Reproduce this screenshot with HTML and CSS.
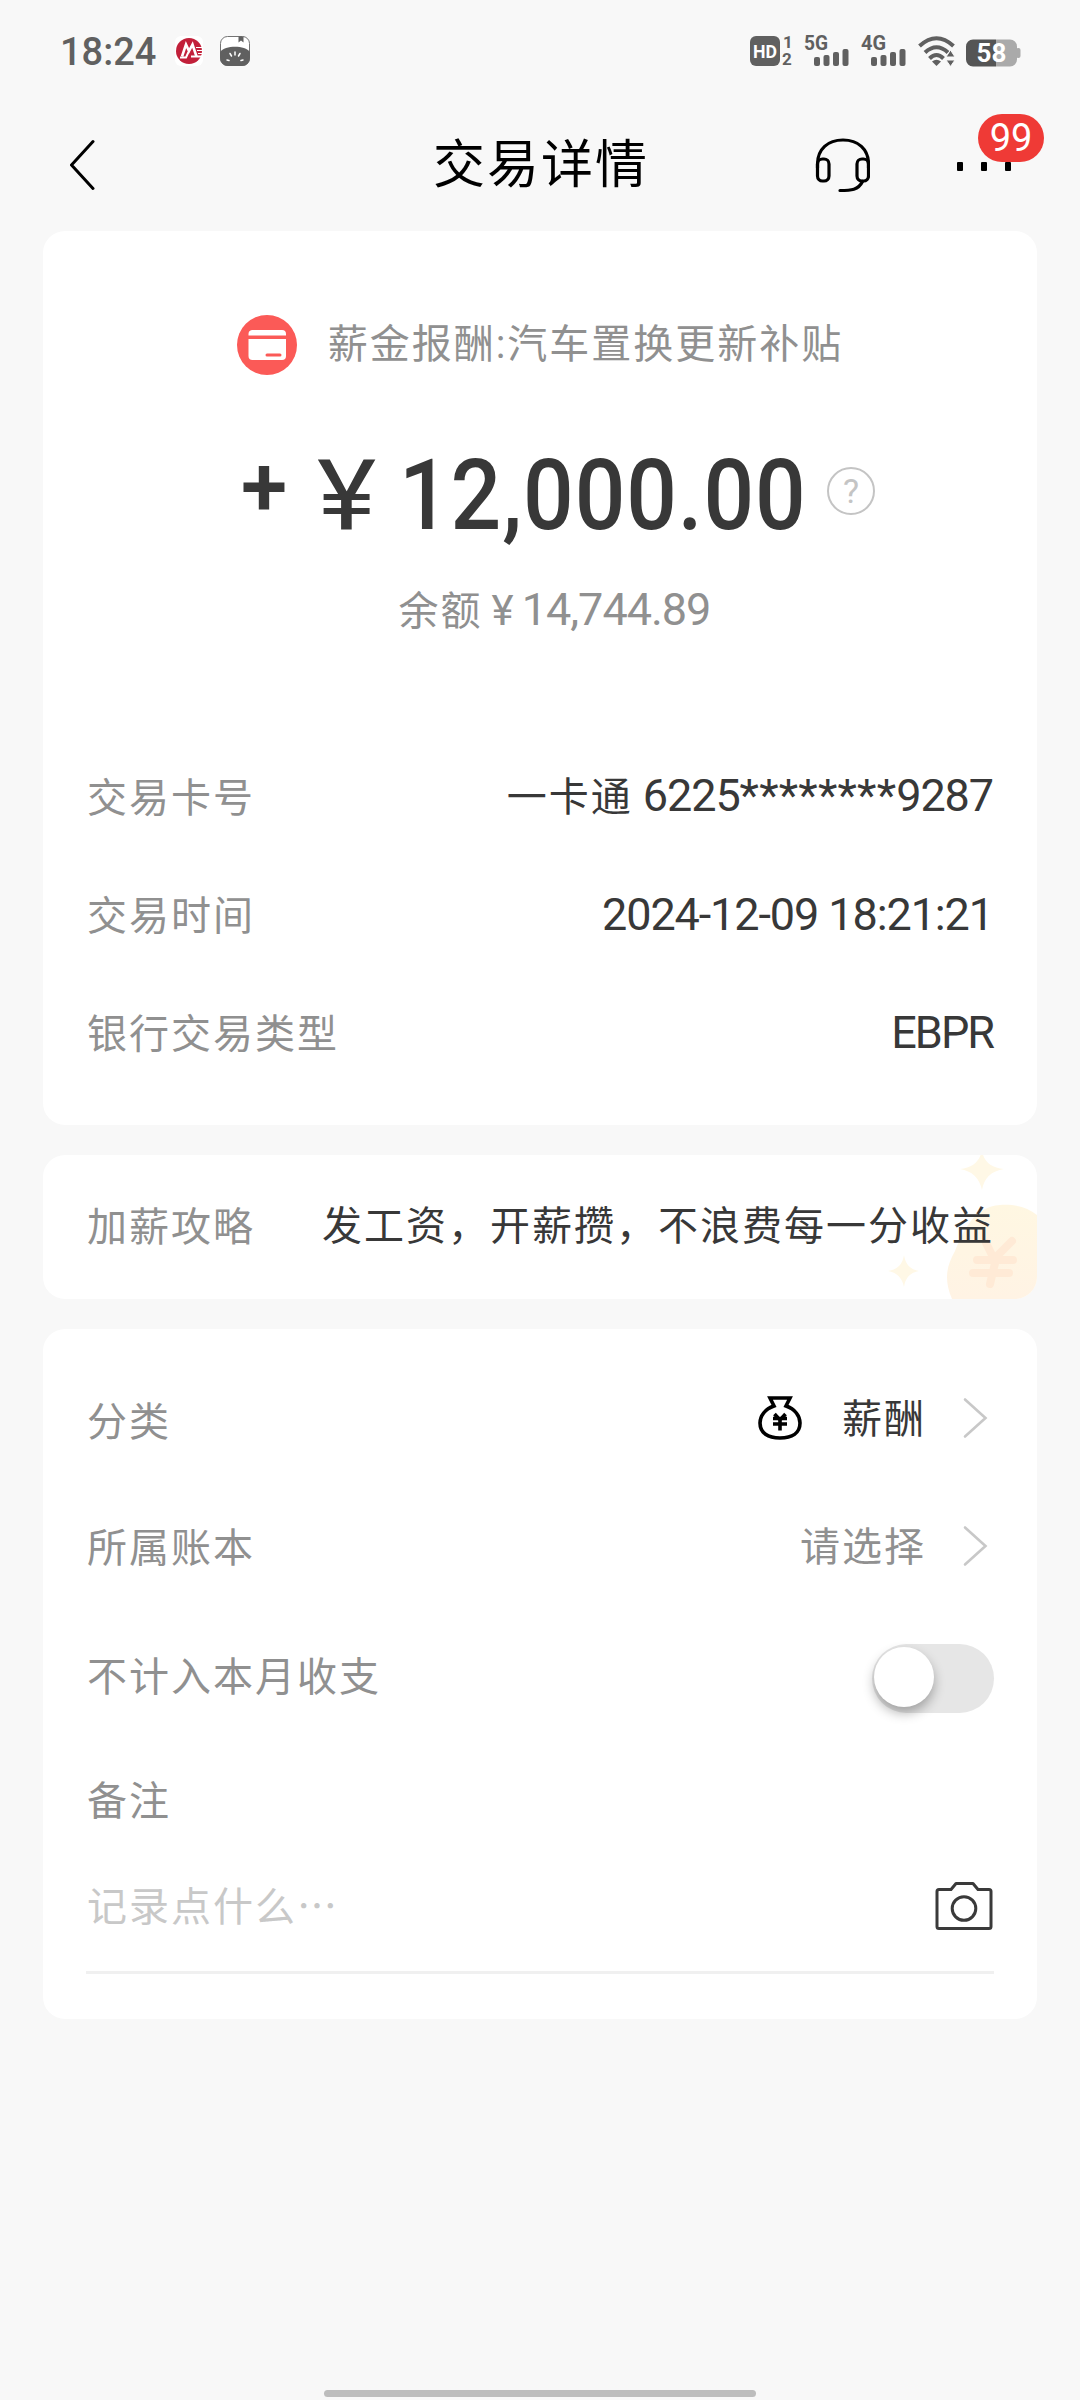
FILE: index.html
```html
<!DOCTYPE html>
<html lang="zh-CN">
<head>
  <meta charset="UTF-8" />
  <meta name="viewport" content="width=device-width, initial-scale=1" />
  <title>交易详情</title>
  <link rel="stylesheet" href="styles.css">
</head>
<body>
  <div class="status-bar">
    <span class="clock">18:24</span>
    <svg class="app-icon" width="28" height="30" viewBox="0 0 28 30">
      <rect width="28" height="30" rx="6" fill="#fff"/>
      <circle cx="14" cy="15" r="13" fill="#c2203a"/>
      <path d="M7 20.500L11 8.500L14 15L17.500 8.500L21.500 20.500" fill="none" stroke="#fff" stroke-width="2.6"/>
      <path d="M5 21.500H11L13.500 16M16 20.500H27" fill="none" stroke="#fff" stroke-width="2"/>
      <path d="M21 11.500h7M22 14.500h6M23 17.500h5" stroke="#fff" stroke-width="1"/>
    </svg>
    <svg class="app-icon app-icon-clip" width="32" height="32" viewBox="0 0 32 32">
      <rect x="1.500" y="1.500" width="29" height="29" rx="7" fill="#fff" stroke="#737373"/>
      <path d="M1 17C6 10 26 10 31 17V23a8 8 0 0 1-8 8H9a8 8 0 0 1-8-8Z" fill="#606060"/>
      <path d="M19.500 1.500h5v6l-2.500-2-2.500 2Z" fill="#606060"/>
      <path d="M16 17v3M11 18.500l1.500 2.500M21 18.500l-1.500 2.500M8 25l2 .5M24 25l-2 .5" stroke="#fff" stroke-width="1.500" stroke-linecap="round"/>
    </svg>

    <div class="status-right">
      <svg width="46" height="40" viewBox="0 -4 46 40">
        <rect x="0" y="1" width="30" height="30" rx="6" fill="#606060"/>
        <text class="st-text st-hd" x="3" y="22.500" textLength="24" lengthAdjust="spacingAndGlyphs">HD</text>
        <text class="st-text st-num" x="33" y="13">1</text>
        <text class="st-text st-num" x="32" y="30">2</text>
      </svg>
      <svg class="signal" width="46" height="40" viewBox="0 -4 46 40">
        <text class="st-text st-net" x="0" y="15" textLength="24" lengthAdjust="spacingAndGlyphs">5G</text>
        <g fill="#606060"><rect x="10" y="22" width="6" height="9" rx="2"/><rect x="19.500" y="20" width="6" height="11" rx="2"/><rect x="29" y="17" width="6" height="14" rx="2"/><rect x="38.500" y="14" width="6" height="17" rx="2"/></g>
      </svg>
      <svg class="signal" width="46" height="40" viewBox="0 -4 46 40">
        <text class="st-text st-net" x="0" y="15" textLength="25" lengthAdjust="spacingAndGlyphs">4G</text>
        <g fill="#606060"><rect x="10" y="22" width="6" height="9" rx="2"/><rect x="19.500" y="20" width="6" height="11" rx="2"/><rect x="29" y="17" width="6" height="14" rx="2"/><rect x="38.500" y="14" width="6" height="17" rx="2"/></g>
      </svg>
      <svg class="wifi" width="38" height="32" viewBox="0 0 38 32">
        <g fill="none" stroke="#606060" stroke-width="4">
          <path d="M1.500 11Q18.500 -4.500 35.500 11"/>
          <path d="M7 17.500Q18.500 7 30 17.500"/>
          <path d="M11.500 23.500Q18.500 16.500 25.500 23.500"/>
        </g>
        <path d="M14 26.500Q18.500 23 23 26.500L18.500 31Z" fill="#606060"/>
        <path d="M32.500 15l4.500 7h-9ZM32.500 31.500l4.500-6.500h-9Z" fill="#606060" stroke="#f8f8f8" stroke-width="1"/>
      </svg>
      <svg class="battery" width="55" height="28" viewBox="0 0 55 28">
        <path d="M7 .5H30V27.500H7a7 7 0 0 1-7-7V7.500a7 7 0 0 1 7-7Z" fill="#555"/>
        <path d="M30 .5H44a7 7 0 0 1 7 7V20.500a7 7 0 0 1-7 7H30Z" fill="#aaa"/>
        <rect x="50" y="9" width="4.500" height="10" rx="2" fill="#aaa"/>
        <text class="st-battery" x="25.500" y="23" text-anchor="middle">58</text>
      </svg>
    </div>
  </div>

  <div class="nav-bar">
    <svg class="back" width="26" height="52" viewBox="0 0 26 52">
      <path d="M23 2.500L1.500 26L23 49.500" fill="none" stroke="#000" stroke-width="3" stroke-linecap="round" stroke-linejoin="round"/>
    </svg>
    <h1 class="nav-title">交易详情</h1>
    <div class="nav-actions">
      <svg width="56" height="56" viewBox="0 0 56 56" fill="none" stroke="#000" stroke-width="3.200" stroke-linecap="round">
        <path d="M3.500 31V27C3.500 12 14 3 29 3S54.500 12 54.500 27V31"/>
        <rect x="3.500" y="22" width="11.500" height="22" rx="5"/>
        <rect x="43" y="22" width="11.500" height="22" rx="5"/>
        <path d="M48.500 44.500C44.500 53 37 53.500 26 53.500"/>
      </svg>
      <div class="more">
        <i></i><i></i><i></i>
        <span class="badge">99</span>
      </div>
    </div>
  </div>

  <div class="content">
    <div class="card summary">
      <div class="merchant">
        <svg width="60" height="60" viewBox="0 0 60 60">
          <circle cx="30" cy="30" r="30" fill="#fb5a57"/>
          <path d="M15 15h30a4 4 0 0 1 4 4v1.500H11.500V19a4 4 0 0 1 3.500-4Z" fill="#fff"/>
          <path d="M11.500 24h37.500v17a4 4 0 0 1-4 4H15.500a4 4 0 0 1-4-4Z" fill="#fff"/>
          <path d="M30 40h13" stroke="#fb5a57" stroke-width="3" stroke-linecap="round"/>
        </svg>
        <span>薪金报酬:汽车置换更新补贴</span>
      </div>
      <div class="amount">
        <span class="plus">+</span>
        <span class="yen">¥</span>
        <span class="number">12,000.00</span>
        <span class="help">?</span>
      </div>
      <div class="balance">余额<span class="balance-yen">¥</span><span class="balance-number">14,744.89</span></div>

      <div class="details">
        <div class="row">
          <span class="label">交易卡号</span>
          <span class="value"><span class="cn">一卡通</span> 6225<span class="stars">********</span>9287</span>
        </div>
        <div class="row">
          <span class="label">交易时间</span>
          <span class="value">2024-12-09 18:21:21</span>
        </div>
        <div class="row">
          <span class="label">银行交易类型</span>
          <span class="value type">EBPR</span>
        </div>
      </div>
    </div>

    <div class="card tips">
      <svg class="tips-bg" width="180" height="144" viewBox="0 0 180 144">
        <defs>
          <linearGradient id="coin" x1="0" y1="0" x2="0" y2="1">
            <stop offset="0" stop-color="#fff7e2"/>
            <stop offset="1" stop-color="#fff3e4"/>
          </linearGradient>
        </defs>
        <path d="M125 -5Q127 12 147 14Q128 17 125 35Q121 17 103 14Q122 12 125 -5Z" fill="#fff8e6"/>
        <path d="M47 100Q49 114 62 116Q49 118 47 132Q44 118 31 116Q45 114 47 100Z" fill="#fff8e6"/>
        <path d="M95 144C87 125 89 112 98 96C108 72 118 52 143 50C158 49 170 52 180 60V144Z" fill="url(#coin)"/>
        <path d="M129 88l8 16M155 86l-18 18M120 105h36M116 118h36M139 104l-6 25" fill="none" stroke="#ffead6" stroke-width="8" stroke-linecap="round"/>
      </svg>
      <span class="label">加薪攻略</span>
      <span class="tips-text">发工资，开薪攒，不浪费每一分收益</span>
    </div>

    <div class="card settings">
      <div class="row category">
        <span class="label">分类</span>
        <div class="picker">
          <svg class="bag" width="44" height="44" viewBox="0 0 44 44" fill="none" stroke="#000">
            <path d="M12 2H32L28 10C37 13 42 20 42 27C42 37 34 42 22 42S2 37 2 27C2 20 7 13 16 10Z" stroke-width="3.600"/>
            <path d="M16.500 18L22 24L27.500 18M15 22.500H29M15 28H29M22 24V34.500" stroke-width="3.600"/>
          </svg>
          <span class="picked">薪酬</span>
          <svg class="chevron" width="26" height="42" viewBox="0 0 26 42"><path d="M3 2.500L23.500 21L3 39.500"/></svg>
        </div>
      </div>
      <div class="row book">
        <span class="label">所属账本</span>
        <div class="picker">
          <span class="unpicked">请选择</span>
          <svg class="chevron" width="26" height="42" viewBox="0 0 26 42"><path d="M3 2.500L23.500 21L3 39.500"/></svg>
        </div>
      </div>
      <div class="row exclude">
        <span class="label">不计入本月收支</span>
        <div class="switch"><div class="knob"></div></div>
      </div>
      <div class="row remark">
        <span class="label">备注</span>
      </div>
      <div class="row note">
        <span class="placeholder">记录点什么<span class="dots">⋯</span></span>
        <svg class="camera" width="58" height="50" viewBox="0 0 58 50" fill="none" stroke="#3a3a3a" stroke-width="3" stroke-linejoin="round">
          <path d="M4 8.500H16L21 2.500H38L43 8.500H54Q56 8.500 56 10.500V45.500Q56 47.500 54 47.500H4Q2 47.500 2 45.500V10.500Q2 8.500 4 8.500Z"/>
          <circle cx="29" cy="27.500" r="11.800"/>
        </svg>
      </div>
    </div>
  </div>

  <div class="home-bar"></div>
</body>
</html>
```

FILE: styles.css
```css
* {
  margin: 0;
  padding: 0;
  box-sizing: border-box;
}

body {
  font-family: Roboto, "Noto Sans CJK SC", sans-serif;
  background-color: #f8f8f8;
  color: #383838;
  width: 1080px;
  height: 2400px;
  overflow: hidden;
  display: flex;
  flex-direction: column;
}

svg {
  display: block;
  flex-shrink: 0;
}

/* status bar */
.status-bar {
  height: 100px;
  padding: 2px 59px 0 60px;
  display: flex;
  align-items: center;
}

.clock {
  width: 115px;
  padding-top: 1px;
  font-size: 38px;
  font-weight: 500;
  line-height: 40px;
  color: #606060;
}

.app-icon-clip {
  margin-left: 16px;
}

.status-right {
  margin-left: auto;
  display: flex;
  align-items: center;
}

.signal {
  margin-left: 11px;
}

.status-right svg:first-child + .signal {
  margin-left: 8px;
}

.wifi {
  margin-left: 11px;
}

.battery {
  margin-left: 10px;
  margin-top: 3px;
}

.st-text {
  font-weight: 700;
  fill: #606060;
}

.st-hd {
  font-size: 18px;
  fill: #fff;
}

.st-num {
  font-size: 17px;
}

.st-net {
  font-size: 20px;
}

.st-battery {
  font-size: 26px;
  font-weight: 700;
  fill: #fff;
}

/* title bar */
.nav-bar {
  height: 131px;
  padding: 0 69px 2px 70px;
  display: flex;
  align-items: center;
  justify-content: space-between;
}

.nav-title {
  margin-left: 337px;
  padding-top: 3px;
  font-size: 52px;
  font-weight: 400;
  line-height: 60px;
  letter-spacing: 2px;
  color: #000;
}

.nav-actions {
  margin-left: auto;
  display: flex;
  align-items: center;
}

.more {
  position: relative;
  margin-left: 87px;
  padding-top: 3px;
  width: 54px;
  display: flex;
  justify-content: space-between;
}

.more i {
  width: 6px;
  height: 9px;
  border-radius: 1px;
  background-color: #000;
}

.badge {
  position: absolute;
  left: 21px;
  top: -45px;
  width: 66px;
  height: 48px;
  border-radius: 24px;
  background-color: #ef3a36;
  color: #fff;
  font-size: 38px;
  line-height: 49px;
  text-align: center;
}

/* cards */
.content {
  padding: 0 43px;
  display: flex;
  flex-direction: column;
  gap: 30px;
}

.card {
  border-radius: 22px;
  background-color: #fff;
}

.row {
  display: flex;
  align-items: center;
  justify-content: space-between;
}

.label {
  padding-left: 1px;
  padding-top: 5px;
  font-size: 40px;
  line-height: 60px;
  letter-spacing: 2px;
  color: #909090;
}

.summary {
  height: 894px;
  padding: 84px 43px 0;
}

.merchant {
  height: 60px;
  display: flex;
  align-items: center;
  justify-content: center;
  gap: 31px;
  font-size: 40px;
  line-height: 60px;
  letter-spacing: 2px;
  color: #909090;
}

.amount {
  height: 100px;
  margin-top: 68px;
  padding-left: 155px;
  display: flex;
  align-items: center;
  line-height: 104px;
}

.plus {
  width: 76px;
  padding-bottom: 13px;
  font-size: 84px;
  font-weight: 600;
  line-height: 96px;
}

/* the DIN-like figures are narrower than the default ones */
.yen {
  width: 82px;
  padding-top: 6px;
  font-size: 98px;
  transform: scaleX(1.15);
  transform-origin: left;
}

.number {
  width: 428px;
  padding-top: 6px;
  font-size: 98px;
  font-weight: 500;
  letter-spacing: 1px;
  transform: scaleX(0.91);
  transform-origin: left;
}

.help {
  width: 48px;
  height: 48px;
  margin-bottom: 4px;
  border: 2px solid #c4c4c4;
  border-radius: 50%;
  font-size: 34px;
  line-height: 45px;
  text-align: center;
  color: #c4c4c4;
}

.balance {
  height: 60px;
  margin-top: 37px;
  padding-left: 29px;
  font-size: 40px;
  line-height: 60px;
  letter-spacing: 2px;
  text-align: center;
  color: #909090;
}

.balance-yen {
  margin: 0 6px 0 9px;
  font-size: 42px;
}

.balance-number {
  font-size: 45px;
  letter-spacing: -1px;
}

.details {
  margin-top: 97px;
}

.details .row {
  height: 118px;
}

.value {
  padding-top: 2px;
  padding-right: 1px;
  font-size: 45px;
  line-height: 60px;
  letter-spacing: -1.1px;
}

.value .cn {
  font-size: 40px;
  letter-spacing: 2px;
}

.stars {
  letter-spacing: 0.2px;
}

.type {
  letter-spacing: -2px;
}

/* salary tips banner */
.tips {
  position: relative;
  height: 144px;
  padding: 0 43px 2px 43px;
  display: flex;
  align-items: center;
  justify-content: space-between;
  overflow: hidden;
}

.tips-bg {
  position: absolute;
  right: 0;
  top: 0;
}

.tips .label {
  padding-top: 3px;
}

.tips-text {
  position: relative;
  padding-top: 2px;
  font-size: 40px;
  line-height: 60px;
  letter-spacing: 2px;
}

/* category, book, note */
.settings {
  height: 690px;
  padding: 25px 43px 0;
}

.category {
  height: 130px;
}

.category .label {
  padding-top: 7px;
}

.category .picker {
  padding-bottom: 2px;
}

.book {
  height: 124px;
}

.exclude {
  height: 140px;
}

.exclude .label {
  padding-top: 0;
}

.remark {
  height: 102px;
}

.note {
  height: 124px;
  padding-bottom: 10px;
  border-bottom: 3px solid #f0f0f0;
}

.picker {
  display: flex;
  align-items: center;
  padding-right: 6px;
  font-size: 40px;
  line-height: 60px;
  letter-spacing: 2px;
}

.picked,
.unpicked {
  padding-top: 3px;
}

.bag {
  margin-right: 40px;
}

.unpicked {
  color: #909090;
}

.chevron {
  margin-left: 36px;
}

.chevron path {
  fill: none;
  stroke: #c8c8c8;
  stroke-width: 2.6;
  stroke-linecap: round;
}

.switch {
  width: 122px;
  height: 69px;
  padding: 3px 2px;
  border-radius: 35px;
  background-color: #e6e6e6;
}

.knob {
  width: 60px;
  height: 60px;
  border-radius: 50%;
  background-color: #fff;
  box-shadow: 0 6px 12px rgba(0, 0, 0, 0.3);
}

.placeholder {
  padding-left: 1px;
  padding-top: 4px;
  font-size: 40px;
  line-height: 60px;
  letter-spacing: 2px;
  color: #c8c8c8;
}

.camera {
  margin-right: 1px;
}

.home-bar {
  width: 432px;
  height: 7px;
  margin: auto auto 3px;
  border-radius: 4px;
  background-color: #bdbdbd;
}
```
